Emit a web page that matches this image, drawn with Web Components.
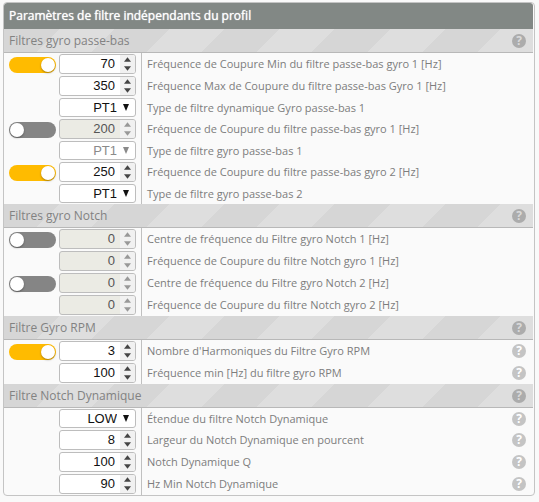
<!DOCTYPE html>
<html lang="fr">
<head>
<meta charset="utf-8">
<title>Paramètres de filtre</title>
<style>
body { margin: 2px 4px 6px 3px; background: #f9f9f9; font-family: "Open Sans", "Noto Sans", sans-serif; color: #7d7d7d; }
</style>
</head>
<body>
<filter-panel heading="Paramètres de filtre indépendants du profil">
  <filter-section heading="Filtres gyro passe-bas">
    <filter-row toggle="on" value="70" label="Fréquence de Coupure Min du filtre passe-bas gyro 1 [Hz]"></filter-row>
    <filter-row value="350" label="Fréquence Max de Coupure du filtre passe-bas Gyro 1 [Hz]"></filter-row>
    <filter-row option="PT1" label="Type de filtre dynamique Gyro passe-bas 1"></filter-row>
    <filter-row toggle="off" value="200" disabled label="Fréquence de Coupure du filtre passe-bas gyro 1 [Hz]"></filter-row>
    <filter-row option="PT1" disabled label="Type de filtre gyro passe-bas 1"></filter-row>
    <filter-row toggle="on" value="250" label="Fréquence de Coupure du filtre passe-bas gyro 2 [Hz]"></filter-row>
    <filter-row option="PT1" label="Type de filtre gyro passe-bas 2"></filter-row>
  </filter-section>
  <filter-section heading="Filtres gyro Notch">
    <filter-row toggle="off" value="0" disabled label="Centre de fréquence du Filtre gyro Notch 1 [Hz]"></filter-row>
    <filter-row value="0" disabled label="Fréquence de Coupure du filtre Notch gyro 1 [Hz]"></filter-row>
    <filter-row toggle="off" value="0" disabled label="Centre de fréquence du Filtre gyro Notch 2 [Hz]"></filter-row>
    <filter-row value="0" disabled label="Fréquence de Coupure du filtre Notch gyro 2 [Hz]"></filter-row>
  </filter-section>
  <filter-section heading="Filtre Gyro RPM">
    <filter-row toggle="on" value="3" help label="Nombre d'Harmoniques du Filtre Gyro RPM"></filter-row>
    <filter-row value="100" help label="Fréquence min [Hz] du filtre gyro RPM"></filter-row>
  </filter-section>
  <filter-section heading="Filtre Notch Dynamique">
    <filter-row option="LOW" help label="Étendue du filtre Notch Dynamique"></filter-row>
    <filter-row value="8" help label="Largeur du Notch Dynamique en pourcent"></filter-row>
    <filter-row value="100" help label="Notch Dynamique Q"></filter-row>
    <filter-row value="90" help label="Hz Min Notch Dynamique"></filter-row>
  </filter-section>
</filter-panel>

<script>
class HelpButton extends HTMLElement {
  constructor() {
    super();
    this.attachShadow({ mode: "open" }).innerHTML = `
      <style>
        :host { display: block; width: 14px; height: 14px; }
        button { display: block; width: 14px; height: 14px; padding: 0; border: 0; border-radius: 50%;
          background: var(--help-bg, #c4c4c4); color: var(--help-fg, #fff);
          font: 700 12px/14px "Open Sans", sans-serif; text-align: center; cursor: pointer; }
      </style>
      <button type="button" title="Aide">?</button>`;
  }
}
customElements.define("help-button", HelpButton);

class ToggleSwitch extends HTMLElement {
  connectedCallback() {
    if (this.shadowRoot) return;
    this.attachShadow({ mode: "open" }).innerHTML = `
      <style>
        :host { display: block; width: 47px; height: 16px; }
        input { appearance: none; display: flex; align-items: center; box-sizing: border-box; margin: 0;
          width: 100%; height: 100%; padding: 0 1px; border-radius: 8px; background: #858585; }
        input::before { content: ""; width: 14px; height: 14px; border-radius: 50%; background: #fff;
          box-shadow: 0 1px 2px rgba(0, 0, 0, .35); }
        input:checked { background: #ffbb00; justify-content: flex-end; }
      </style>
      <input type="checkbox" role="switch">`;
    const box = this.shadowRoot.querySelector("input");
    box.checked = this.hasAttribute("checked");
    box.setAttribute("aria-label", this.getAttribute("label"));
  }
}
customElements.define("toggle-switch", ToggleSwitch);

class FilterRow extends HTMLElement {
  connectedCallback() {
    if (this.shadowRoot) return;
    const attr = name => this.getAttribute(name);
    const label = attr("label");
    const dis = this.hasAttribute("disabled") ? "disabled" : "";
    const option = attr("option");
    const toggle = attr("toggle");
    const control = option
      ? `<div class="field select"><select id="control" ${dis}><option>${option}</option></select>
           <svg width="6" height="7" viewBox="0 0 6 7" aria-hidden="true"><path d="M0 0h6L3 7z"/></svg></div>`
      : `<div class="field number"><input id="control" type="number" value="${attr("value")}" ${dis}>
           <div class="spin">
             <button type="button" tabindex="-1" data-step="1" aria-label="Augmenter" ${dis}><svg width="7" height="5" viewBox="0 0 8 5"><path d="M0 5 4 0 8 5z"/></svg></button>
             <button type="button" tabindex="-1" data-step="-1" aria-label="Diminuer" ${dis}><svg width="7" height="5" viewBox="0 0 8 5"><path d="M0 0h8L4 5z"/></svg></button>
           </div></div>`;
    this.attachShadow({ mode: "open" }).innerHTML = `
      <style>
        :host { display: grid; grid-template-columns: 50px 77px 1fr auto; align-items: center;
          padding: 0 7px 0 5px; }
        toggle-switch { grid-column: 1; margin-top: 2px; }
        .field { grid-column: 2; box-sizing: border-box; border: 1px solid #bdbdbd; border-radius: 3px;
          background: #fff; overflow: hidden; color: #111; }
        .number { display: flex; height: 20px; margin: 1px 0; }
        .select { display: grid; align-items: center; height: 19px; margin: 1px 0; }
        input, select { font: 13px/18px "Liberation Sans", Arial, sans-serif; color: inherit; background: none;
          border: 0; margin: 0; box-sizing: border-box; outline-offset: -2px; }
        input { flex: 1; min-width: 0; padding: 0 5px 1px 0; text-align: right; appearance: textfield; }
        input::-webkit-inner-spin-button { appearance: none; margin: 0; }
        select { grid-area: 1 / 1; width: 100%; height: 17px; padding: 0 18px 0 0; appearance: none;
          text-align-last: right; line-height: 17px; opacity: 1; }
        .select svg { grid-area: 1 / 1; justify-self: end; margin-right: 6px; pointer-events: none; }
        .spin { display: flex; flex-direction: column; justify-content: center; gap: 4px; align-items: center;
          width: 15px; background: #f1f1f1; }
        .spin button { display: block; padding: 0; border: 0; background: none; width: 15px; height: 5px;
          line-height: 0; color: #444; }
        svg { fill: currentColor; }
        :host([disabled]) .field { color: #555; }
        :host([disabled]) .number { background: #ebebe4; }
        :host([disabled]) .select { color: #8a8a8a; }
        :host([disabled]) .spin button { color: #999; }
        .text { grid-column: 3; align-self: stretch; display: flex; align-items: center;
          margin-left: 5px; padding-left: 5px; border-left: 1px solid #c0c0c0;
          font-size: 11px; line-height: 18px; white-space: nowrap; }
        help-button { grid-column: 4; }
      </style>
      ${toggle ? `<toggle-switch ${toggle === "on" ? "checked" : ""} label="${label}"></toggle-switch>` : ""}
      ${control}
      <div class="text"><label for="control">${label}</label></div>
      ${this.hasAttribute("help") ? "<help-button></help-button>" : ""}`;
    const input = this.shadowRoot.querySelector("#control");
    this.shadowRoot.querySelectorAll("[data-step]").forEach(b =>
      b.addEventListener("click", () => { input.value = Number(input.value) + Number(b.dataset.step); }));
  }
}
customElements.define("filter-row", FilterRow);

class FilterSection extends HTMLElement {
  connectedCallback() {
    if (this.shadowRoot) return;
    this.attachShadow({ mode: "open" }).innerHTML = `
      <style>
        :host { display: block; }
        header { display: flex; align-items: center; justify-content: space-between; height: 23px;
          padding: 0 7px 0 5px; border-bottom: 1px solid #b8b8b8;
          background: repeating-linear-gradient(135deg, #d6d6d6 0 39px, #dedede 39px 78px);
          --help-bg: #acacac; --help-fg: #dadada; }
        h3 { margin: 0; font-size: 12px; line-height: 23px; font-weight: 400; color: #828282; }
      </style>
      <header><h3>${this.getAttribute("heading")}</h3><help-button></help-button></header>
      <slot></slot>`;
  }
}
customElements.define("filter-section", FilterSection);

class FilterPanel extends HTMLElement {
  connectedCallback() {
    if (this.shadowRoot) return;
    this.attachShadow({ mode: "open" }).innerHTML = `
      <style>
        :host { display: block; padding-right: 1px; border: 1px solid #c4c4c4; border-radius: 4px;
          background: #fafafa; overflow: hidden; }
        h2 { margin: 0; padding: 0 5px; background: #828885; color: #fff; font-size: 12px;
          line-height: 26px; font-weight: 400; text-shadow: 0 0 1px #fff; border-radius: 3px 3px 0 0; }
      </style>
      <h2>${this.getAttribute("heading")}</h2>
      <slot></slot>`;
  }
}
customElements.define("filter-panel", FilterPanel);
</script>
</body>
</html>
